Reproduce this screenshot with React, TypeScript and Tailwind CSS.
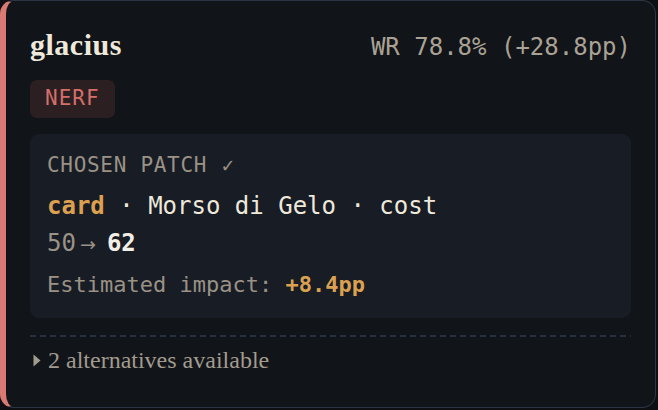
import React from "react";

const mono = "font-['DejaVu_Sans_Mono',monospace]";
const serif = "font-['Liberation_Serif',serif]";

function CaretRight() {
  return (
    <svg width="8" height="13" viewBox="0 0 8 13" className="shrink-0" aria-hidden>
      <polygon points="0.5,0.5 7.5,6.5 0.5,12.5" fill="#a39b8e" />
    </svg>
  );
}

export default function App() {
  return (
    <div className="h-[410px] w-[658px] bg-[#0e1014]">
      <div className="h-[408px] w-[656px] rounded-[14px] border border-[#2b3543] border-l-[6px] border-l-[#d97a73] bg-[#111419] px-6 pt-[26px]">
        {/* header */}
        <div className="flex h-[36px] items-baseline justify-between">
          <h1 className={`${serif} text-[30px] leading-[36px] font-bold tracking-[0.5px] text-[#efe9dc]`}>
            glacius
          </h1>
          <span className={`${mono} text-[24px] leading-[36px] text-[#aaa294]`}>
            WR 78.8% (+28.8pp)
          </span>
        </div>

        <div className="mt-[17px] flex">
          <span
            className={`${mono} flex h-[38px] items-center rounded-[7px] bg-[#2c1f22] px-[15px] text-[21px] tracking-[1px] text-[#d46f69]`}
          >
            NERF
          </span>
        </div>

        {/* chosen patch */}
        <div className={`${mono} mt-4 h-[184px] rounded-[9px] bg-[#181c25] px-[17px] pt-[17px]`}>
          <div className="text-[21px] leading-[28px] tracking-[0.7px] text-[#9a9285]">
            CHOSEN PATCH <span className="font-['DejaVu_Sans',sans-serif] text-[18px]">✓</span>
          </div>
          <div className="mt-[10px] text-[24px] leading-[32px] text-[#efe9dc]">
            <span className="font-bold text-[#dca150]">card</span> · Morso di Gelo · cost
          </div>
          <div className="mt-[5px] flex items-baseline text-[24px] leading-[32px]">
            <span className="text-[#9a9285]">50</span>
            <span className="ml-[2px] w-[20px] text-center font-['DejaVu_Sans',sans-serif] text-[19px] text-[#9a9285]">
              →
            </span>
            <span className="ml-[9px] font-bold text-[#f3efe6]">62</span>
          </div>
          <div className="mt-[10px] text-[22px] leading-[30px] text-[#9a9285]">
            Estimated impact: <span className="font-bold text-[#dca150]">+8.4pp</span>
          </div>
        </div>

        <div className="mt-[17px] h-[2px] bg-[repeating-linear-gradient(90deg,#263040_0px,#263040_6px,transparent_6px,transparent_10px)]" />

        <div className={`${serif} mt-[7px] flex items-center gap-[7px] pl-[3px] text-[24px] leading-[32px] text-[#a39b8e]`}>
          <CaretRight />
          <span>2 alternatives available</span>
        </div>
      </div>
    </div>
  );
}
